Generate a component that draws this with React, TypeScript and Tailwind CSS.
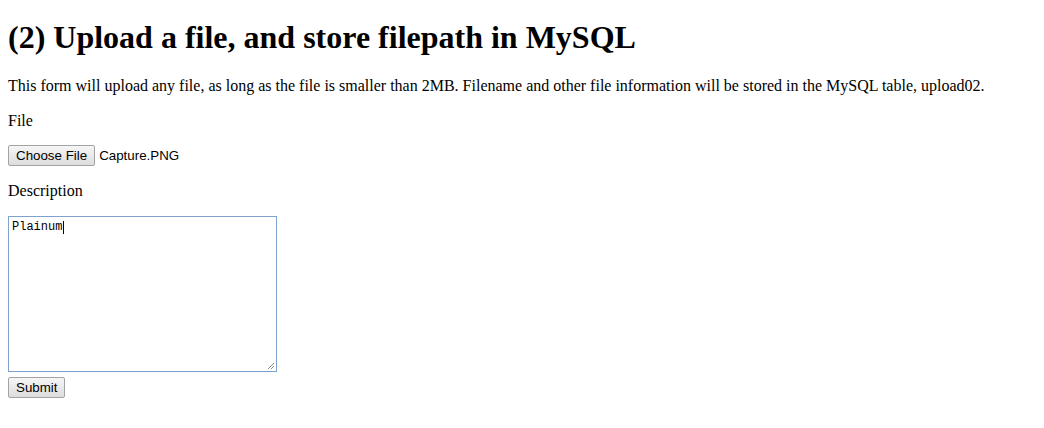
import React from "react";

const serif = { fontFamily: '"Liberation Serif", "Times New Roman", serif' };
const sans = { fontFamily: '"Liberation Sans", Arial, sans-serif' };
const mono = { fontFamily: '"Liberation Mono", "DejaVu Sans Mono", monospace' };

const GreyButton: React.FC<{ children: React.ReactNode; className?: string }> = ({
  children,
  className = "",
}) => (
  <button
    type="button"
    style={sans}
    className={`h-[21px] rounded-[2px] border border-[#a3a3a3] bg-gradient-to-b from-[#f6f6f6] to-[#dddddd] px-[7px] text-[13.33px] leading-none text-black ${className}`}
  >
    {children}
  </button>
);

export default function App() {
  return (
    <div style={serif} className="min-h-screen bg-white px-2 text-black">
      {/* Title */}
      <h1 className="mt-[19px] mb-0 text-[32px] font-bold leading-[37px]">
        (2) Upload a file, and store filepath in MySQL
      </h1>

      <p className="mt-[21px] text-base leading-[18px]">
        This form will upload any file, as long as the file is smaller than 2MB. Filename and other
        file information will be stored in the MySQL table, upload02.
      </p>

      {/* Form */}
      <div className="mt-[17px] text-base leading-[18px]">File</div>

      <div className="mt-[15px] flex items-center gap-[4px]">
        <GreyButton>Choose File</GreyButton>
        <span style={sans} className="text-[13.33px]">
          Capture.PNG
        </span>
      </div>

      <div className="mt-[16px] text-base leading-[18px]">Description</div>

      <div className="relative mt-[16px] h-[156px] w-[269px] border border-[#7da2ce] bg-white">
        <div style={mono} className="flex items-center pl-[3px] pt-[3px] text-[12px] leading-[14px]">
          Plainum
          <span className="ml-[1px] inline-block h-[13px] w-px bg-black" />
        </div>
        <svg className="absolute right-[1px] bottom-[1px]" width="9" height="9" viewBox="0 0 9 9">
          <line x1="8" y1="2" x2="2" y2="8" stroke="#8a8a8a" strokeWidth="1" />
          <line x1="8" y1="5" x2="5" y2="8" stroke="#8a8a8a" strokeWidth="1" />
        </svg>
      </div>

      <div className="mt-[3px]">
        <GreyButton>Submit</GreyButton>
      </div>
    </div>
  );
}
